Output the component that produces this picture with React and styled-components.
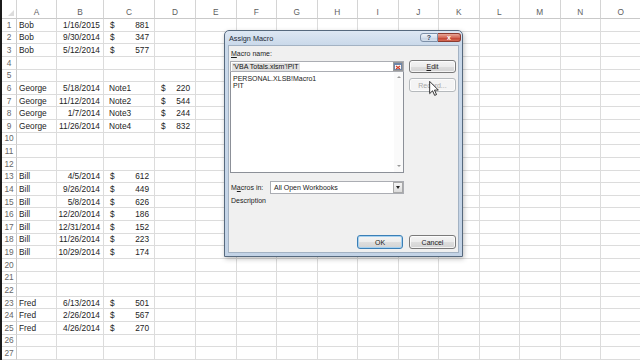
import React from 'react';
import styled, { createGlobalStyle } from 'styled-components';

const Global = createGlobalStyle`
  *, *::before, *::after { box-sizing: border-box; }
  html, body { margin: 0; padding: 0; background: #fff; overflow: hidden; }
  #root { width: 640px; height: 360px; overflow: hidden; }
`;

const COLS = ['A', 'B', 'C', 'D', 'E', 'F', 'G', 'H', 'I', 'J', 'K', 'L', 'M', 'N', 'O'];
const WIDTHS = [40, 47, 51, 41, ...Array(11).fill(40.5)];
const ROWCOUNT = 27;

const DATA = {
  1: ['Bob', '1/16/2015', { acc: '881' }],
  2: ['Bob', '9/30/2014', { acc: '347' }],
  3: ['Bob', '5/12/2014', { acc: '577' }],
  6: ['George', '5/18/2014', 'Note1', { acc: '220' }],
  7: ['George', '11/12/2014', 'Note2', { acc: '544' }],
  8: ['George', '1/7/2014', 'Note3', { acc: '244' }],
  9: ['George', '11/26/2014', 'Note4', { acc: '832' }],
  13: ['Bill', '4/5/2014', { acc: '612' }],
  14: ['Bill', '9/26/2014', { acc: '449' }],
  15: ['Bill', '5/8/2014', { acc: '626' }],
  16: ['Bill', '12/20/2014', { acc: '186' }],
  17: ['Bill', '12/31/2014', { acc: '152' }],
  18: ['Bill', '11/26/2014', { acc: '223' }],
  19: ['Bill', '10/29/2014', { acc: '174' }],
  23: ['Fred', '6/13/2014', { acc: '501' }],
  24: ['Fred', '2/26/2014', { acc: '567' }],
  25: ['Fred', '4/26/2014', { acc: '270' }],
};

const Wrap = styled.div`
  position: relative;
  width: 640px;
  height: 360px;
  overflow: hidden;
  background: #fff;
`;

const Sheet = styled.div`
  display: grid;
  grid-template-columns: 15px ${WIDTHS.map((w) => `${w}px`).join(' ')};
  grid-template-rows: 19px repeat(${ROWCOUNT}, 12.625px);
  border-left: 2px solid #1b1b1b;
  width: max-content;
  height: 360px;
  font-family: "Liberation Sans", Arial, sans-serif;
`;

const Corner = styled.div`
  position: relative;
  border-right: 1px solid #d4d4d4;
  border-bottom: 1px solid #c9c9c9;
  &::after {
    content: '';
    position: absolute;
    right: 2px;
    bottom: 2px;
    border-style: solid;
    border-width: 0 0 6px 6px;
    border-color: transparent transparent #dcdcdc transparent;
  }
`;

const ColHead = styled.div`
  border-right: 1px solid #d4d4d4;
  border-bottom: 1px solid #c9c9c9;
  display: flex;
  align-items: center;
  justify-content: center;
  padding-top: 5px;
  font-size: 8.3px;
  color: #5e5e5e;
`;

const RowHead = styled.div`
  border-right: 1px solid #c9c9c9;
  border-bottom: 1px solid #dadada;
  display: flex;
  align-items: center;
  justify-content: center;
  font-size: 8.3px;
  color: #666;
`;

const Cell = styled.div`
  border-right: 1px solid #dcdcdc;
  border-bottom: 1px solid #dcdcdc;
  display: flex;
  align-items: center;
  justify-content: ${(p) => (p.$kind === 'date' ? 'flex-end' : p.$kind === 'acc' ? 'space-between' : 'flex-start')};
  padding: ${(p) => (p.$kind === 'date' ? '0 3px 0 2px' : p.$kind === 'acc' ? '0 5px 0 6px' : p.$kind === 'note' ? '0 2px 0 5px' : '0 2px 0 2px')};
  font-size: 8.3px;
  color: #1c1c1c;
  white-space: nowrap;
  overflow: hidden;
`;

function renderCell(val, colIdx, key) {
  if (val == null) return <Cell key={key} />;
  if (typeof val === 'object') {
    return (
      <Cell key={key} $kind="acc">
        <span>$</span>
        <span>{val.acc}</span>
      </Cell>
    );
  }
  if (colIdx === 1) return <Cell key={key} $kind="date">{val}</Cell>;
  if (colIdx === 2) return <Cell key={key} $kind="note">{val}</Cell>;
  return <Cell key={key}>{val}</Cell>;
}

/* ---------- dialog ---------- */

const Dialog = styled.div`
  position: absolute;
  left: 224px;
  top: 30px;
  width: 239px;
  height: 227px;
  border: 1px solid #56697e;
  border-radius: 5px 5px 0 0;
  background: linear-gradient(#dde7f3, #cad9ea 14px, #c3d3e6);
  padding: 0 3px 3px 3px;
  display: flex;
  flex-direction: column;
  box-shadow: 1px 2px 5px rgba(0, 0, 0, 0.25);
  font-family: "Liberation Sans", Arial, sans-serif;
  font-size: 7px;
  color: #1b1b1b;
`;

const TitleBar = styled.div`
  height: 14px;
  display: flex;
  align-items: center;
  justify-content: space-between;
  padding-left: 1px;
`;

const TitleText = styled.span`
  font-size: 7.3px;
  color: #1e2a36;
`;

const TitleButtons = styled.div`
  display: flex;
  align-self: flex-start;
  margin-top: 2px;
  margin-right: -2px;
`;

const TitleBtn = styled.div`
  width: ${(p) => p.$w}px;
  height: 9px;
  border: 1px solid ${(p) => (p.$close ? '#8c3b30' : '#7d90a8')};
  border-radius: ${(p) => (p.$close ? '0 3px 3px 0' : '3px 0 0 3px')};
  border-left-width: ${(p) => (p.$close ? 0 : 1)}px;
  background: ${(p) =>
    p.$close
      ? 'linear-gradient(#e9a797, #d36a58 50%, #c0402e 51%, #d46a55)'
      : 'linear-gradient(#eef3f9, #d6e1ee 50%, #c6d4e5 51%, #d3deeb)'};
  color: ${(p) => (p.$close ? '#fff' : '#34485f')};
  font-size: 7px;
  font-weight: bold;
  display: flex;
  align-items: center;
  justify-content: center;
  line-height: 1;
`;

const Body = styled.div`
  flex: 1;
  background: #f0f0f0;
  border: 1px solid #a3b2c3;
  padding: 3px 2px 3px 1px;
  display: flex;
  flex-direction: column;
`;

const TopSection = styled.div`
  display: grid;
  grid-template-columns: 174px 47px;
  column-gap: 5px;
`;

const LeftCol = styled.div`
  display: flex;
  flex-direction: column;
`;

const RightCol = styled.div`
  display: flex;
  flex-direction: column;
  gap: 5px;
  padding-top: 11px;
`;

const Label = styled.div`
  height: 10px;
  line-height: 10px;
  padding-left: 1px;
  margin-bottom: 2px;
  color: #1b1b1b;
`;

const Mn = styled.span`
  text-decoration: underline;
`;

const NameInput = styled.div`
  height: 11px;
  border: 1px solid #abadb3;
  background: #fff;
  display: flex;
  align-items: center;
  padding-left: 1px;
`;

const Selected = styled.span`
  background: #e1e1e1;
  padding: 0 1px;
  line-height: 8px;
  color: #111;
`;

const CollapseIcon = styled.div`
  margin-left: auto;
  width: 10px;
  height: 9px;
  border: 1px solid #9a9a9a;
  background: #f3f3f3;
  display: flex;
  align-items: center;
  justify-content: center;
`;

const ListBox = styled.div`
  height: 101px;
  border: 1px solid #8c9098;
  border-top: 0;
  background: #fff;
  display: flex;
`;

const ListItems = styled.div`
  flex: 1;
  padding: 3px 2px;
  line-height: 7px;
  display: flex;
  flex-direction: column;
`;

const ScrollBar = styled.div`
  width: 9px;
  display: flex;
  flex-direction: column;
  justify-content: space-between;
  align-items: center;
  padding: 4px 0 5px;
  background: #fafafa;
`;

const Arrow = styled.div`
  width: 0;
  height: 0;
  border-left: 2px solid transparent;
  border-right: 2px solid transparent;
  ${(p) => (p.$up ? 'border-bottom: 2px solid #9a9a9a;' : 'border-top: 2px solid #9a9a9a;')}
`;

const Btn = styled.div`
  width: ${(p) => p.$w}px;
  height: ${(p) => p.$h || 14}px;
  border: 1px solid ${(p) => (p.$default ? '#3b7fb6' : p.$disabled ? '#b5b9bc' : '#7a7a7a')};
  border-radius: 3px;
  background: ${(p) =>
    p.$disabled
      ? '#f4f4f4'
      : 'linear-gradient(#f4f4f4 0%, #ececec 50%, #dedede 51%, #d3d3d3 100%)'};
  box-shadow: inset 0 0 0 1px ${(p) => (p.$default ? '#a6d1f0' : 'rgba(255,255,255,0.75)')};
  color: ${(p) => (p.$disabled ? '#a7a7a7' : '#1b1b1b')};
  font-size: 7px;
  display: flex;
  align-items: center;
  justify-content: center;
`;

const MacrosRow = styled.div`
  margin-top: 8px;
  display: flex;
  align-items: center;
  height: 13px;
`;

const MacrosLabel = styled.div`
  width: 40px;
  padding-left: 1px;
`;

const Select = styled.div`
  width: 134px;
  height: 13px;
  border: 1px solid #abadb3;
  background: #fff;
  display: flex;
  align-items: center;
  padding-left: 3px;
`;

const SelectBtn = styled.div`
  margin-left: auto;
  width: 10px;
  height: 11px;
  border: 1px solid #a9a9a9;
  background: linear-gradient(#f5f5f5, #dcdcdc);
  display: flex;
  align-items: center;
  justify-content: center;
`;

const DownTri = styled.div`
  width: 0;
  height: 0;
  border-left: 2.5px solid transparent;
  border-right: 2.5px solid transparent;
  border-top: 3px solid #222;
`;

const Description = styled.div`
  margin-top: 2px;
  height: 10px;
  line-height: 10px;
  padding-left: 1px;
`;

const ButtonRow = styled.div`
  margin-top: auto;
  display: flex;
  justify-content: flex-end;
  gap: 6px;
`;

const Cursor = styled.svg`
  position: absolute;
  left: 429px;
  top: 81px;
  width: 10px;
  height: 15px;
`;

export default function App() {
  const cells = [];
  cells.push(<Corner key="corner" />);
  COLS.forEach((c) => cells.push(<ColHead key={`h${c}`}>{c}</ColHead>));
  for (let r = 1; r <= ROWCOUNT; r++) {
    cells.push(<RowHead key={`r${r}`}>{r}</RowHead>);
    const row = DATA[r] || [];
    COLS.forEach((c, i) => {
      cells.push(renderCell(row[i], i, `${r}-${c}`));
    });
  }

  return (
    <Wrap>
      <Global />
      <Sheet>{cells}</Sheet>

      <Dialog>
        <TitleBar>
          <TitleText>Assign Macro</TitleText>
          <TitleButtons>
            <TitleBtn $w={18}>?</TitleBtn>
            <TitleBtn $w={23} $close>
              x
            </TitleBtn>
          </TitleButtons>
        </TitleBar>
        <Body>
          <TopSection>
            <LeftCol>
              <Label>
                <Mn>M</Mn>acro name:
              </Label>
              <NameInput>
                <Selected>'VBA Totals.xlsm'!PIT</Selected>
                <CollapseIcon>
                  <svg width="8" height="7" viewBox="0 0 8 7">
                    <rect x="0.5" y="0.5" width="7" height="6" fill="#fff" stroke="#6f86a8" />
                    <rect x="0.5" y="0.5" width="7" height="1.5" fill="#6f86a8" />
                    <path d="M2 3 L6 6 M6 3 L2 6" stroke="#d0402a" strokeWidth="1.2" />
                  </svg>
                </CollapseIcon>
              </NameInput>
              <ListBox>
                <ListItems>
                  <span>PERSONAL.XLSB!Macro1</span>
                  <span>PIT</span>
                </ListItems>
                <ScrollBar>
                  <Arrow $up />
                  <Arrow />
                </ScrollBar>
              </ListBox>
            </LeftCol>
            <RightCol>
              <Btn $w={47} $h={13}>
                <Mn>E</Mn>dit
              </Btn>
              <Btn $w={47} $h={14} $disabled>
                Record...
              </Btn>
            </RightCol>
          </TopSection>

          <MacrosRow>
            <MacrosLabel>
              M<Mn>a</Mn>cros in:
            </MacrosLabel>
            <Select>
              <span>All Open Workbooks</span>
              <SelectBtn>
                <DownTri />
              </SelectBtn>
            </Select>
          </MacrosRow>
          <Description>Description</Description>

          <ButtonRow>
            <Btn $w={46} $default>
              OK
            </Btn>
            <Btn $w={47}>Cancel</Btn>
          </ButtonRow>
        </Body>
      </Dialog>

      <Cursor viewBox="0 0 12 19">
        <path
          d="M0.5 0.5 L0.5 16 L4.2 12.4 L6.8 18.2 L9.2 17.2 L6.6 11.5 L11.5 11.5 Z"
          fill="#fff"
          stroke="#000"
          strokeWidth="1"
          strokeLinejoin="round"
        />
      </Cursor>
    </Wrap>
  );
}
